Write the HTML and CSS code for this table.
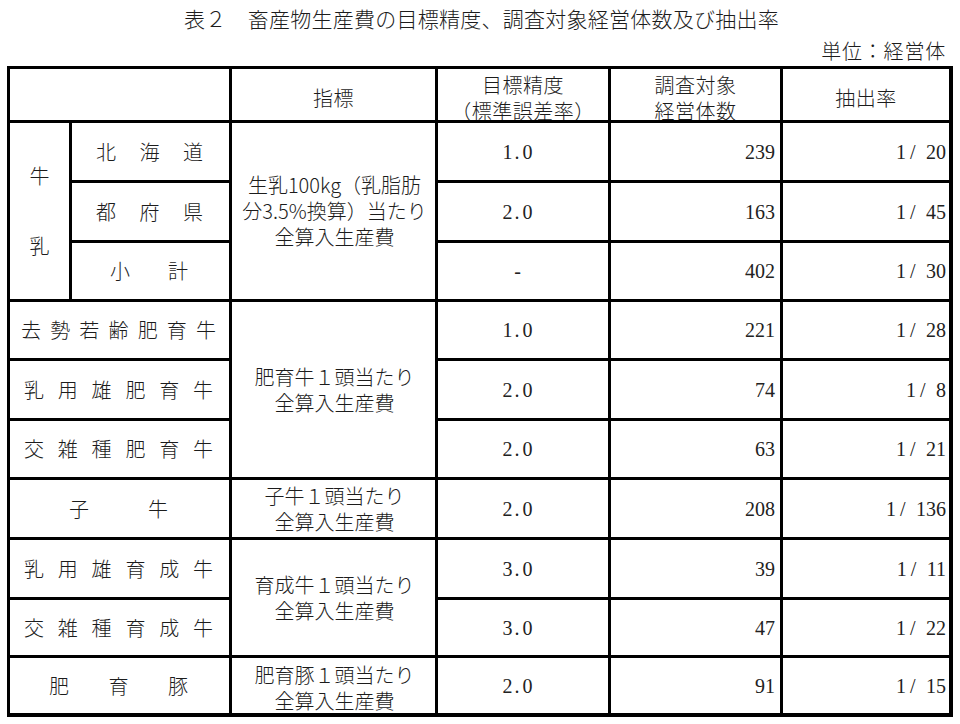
FILE: index.html
```html
<!DOCTYPE html>
<html lang="ja">
<head>
<meta charset="utf-8">
<title>表２ 畜産物生産費の目標精度、調査対象経営体数及び抽出率</title>
<link rel="stylesheet" href="styles.css">
</head>
<body>
<div class="page">
  <h1 class="title">表２　畜産物生産費の目標精度、調査対象経営体数及び抽出率</h1>
  <div class="unit">単位：経営体</div>
  <div class="table">
    <div class="cell hd span2"></div>
    <div class="cell hd">指標</div>
    <div class="cell hd col"><span>目標精度</span><span>（標準誤差率）</span></div>
    <div class="cell hd col"><span>調査対象</span><span>経営体数</span></div>
    <div class="cell hd">抽出率</div>

    <div class="cell rs3 milk"><span>牛</span><span>乳</span></div>
    <div class="cell dist p-hok"><span>北</span><span>海</span><span>道</span></div>
    <div class="cell rs3 col idx"><span>生乳100kg（乳脂肪</span><span>分3.5%換算）当たり</span><span>全算入生産費</span></div>
    <div class="cell num ctr">1<span class="dt">.</span>0</div>
    <div class="cell num rt">239</div>
    <div class="cell num rt r2">1<span class="sl">/</span>20</div>

    <div class="cell dist p-hok"><span>都</span><span>府</span><span>県</span></div>
    <div class="cell num ctr">2<span class="dt">.</span>0</div>
    <div class="cell num rt">163</div>
    <div class="cell num rt r2">1<span class="sl">/</span>45</div>

    <div class="cell dist p-sho"><span>小</span><span>計</span></div>
    <div class="cell num ctr">-</div>
    <div class="cell num rt">402</div>
    <div class="cell num rt r2">1<span class="sl">/</span>30</div>

    <div class="cell span2 dist p-7"><span>去</span><span>勢</span><span>若</span><span>齢</span><span>肥</span><span>育</span><span>牛</span></div>
    <div class="cell rs3 col idx"><span>肥育牛１頭当たり</span><span>全算入生産費</span></div>
    <div class="cell num ctr">1<span class="dt">.</span>0</div>
    <div class="cell num rt">221</div>
    <div class="cell num rt r2">1<span class="sl">/</span>28</div>

    <div class="cell span2 dist p-6"><span>乳</span><span>用</span><span>雄</span><span>肥</span><span>育</span><span>牛</span></div>
    <div class="cell num ctr">2<span class="dt">.</span>0</div>
    <div class="cell num rt">74</div>
    <div class="cell num rt r2">1<span class="sl">/</span>8</div>

    <div class="cell span2 dist p-6"><span>交</span><span>雑</span><span>種</span><span>肥</span><span>育</span><span>牛</span></div>
    <div class="cell num ctr">2<span class="dt">.</span>0</div>
    <div class="cell num rt">63</div>
    <div class="cell num rt r2">1<span class="sl">/</span>21</div>

    <div class="cell span2 dist p-ko"><span>子</span><span>牛</span></div>
    <div class="cell col idx"><span>子牛１頭当たり</span><span>全算入生産費</span></div>
    <div class="cell num ctr">2<span class="dt">.</span>0</div>
    <div class="cell num rt">208</div>
    <div class="cell num rt r2">1<span class="sl">/</span>136</div>

    <div class="cell span2 dist p-6"><span>乳</span><span>用</span><span>雄</span><span>育</span><span>成</span><span>牛</span></div>
    <div class="cell rs2 col idx"><span>育成牛１頭当たり</span><span>全算入生産費</span></div>
    <div class="cell num ctr">3<span class="dt">.</span>0</div>
    <div class="cell num rt">39</div>
    <div class="cell num rt r2">1<span class="sl">/</span>11</div>

    <div class="cell span2 dist p-6"><span>交</span><span>雑</span><span>種</span><span>育</span><span>成</span><span>牛</span></div>
    <div class="cell num ctr">3<span class="dt">.</span>0</div>
    <div class="cell num rt">47</div>
    <div class="cell num rt r2">1<span class="sl">/</span>22</div>

    <div class="cell span2 dist p-buta"><span>肥</span><span>育</span><span>豚</span></div>
    <div class="cell col idx low"><span>肥育豚１頭当たり</span><span>全算入生産費</span></div>
    <div class="cell num ctr">2<span class="dt">.</span>0</div>
    <div class="cell num rt">91</div>
    <div class="cell num rt r2">1<span class="sl">/</span>15</div>
  </div>
</div>
</body>
</html>
```

FILE: styles.css
```css
html, body {
  margin: 0;
  padding: 0;
  background: #ffffff;
}

body {
  font-family: "Noto Sans CJK JP", "Noto Sans CJK SC", sans-serif;
  color: #1c1c1c;
  font-weight: 300;
}

.page {
  width: 960px;
  height: 724px;
  overflow: hidden;
}

.title {
  margin: 0;
  height: 36px;
  line-height: 36px;
  font-size: 21px;
  font-weight: 300;
  letter-spacing: 0.25px;
  text-align: center;
  padding-left: 3px;
}

.unit {
  margin-top: 2px;
  height: 26px;
  line-height: 26px;
  font-size: 20px;
  letter-spacing: 0.8px;
  text-align: right;
  padding-right: 14px;
}

.table {
  margin: 2px 0 0 7px;
  width: 946px;
  box-sizing: border-box;
  background: #000000;
  padding: 3px 4px 4px 3px;
  display: grid;
  gap: 3px;
  grid-template-columns: 59px 157px 203px 170px 169px 166px;
  grid-template-rows: 51px 57px 57px 56px 56px 57px 56px 57px 57px 55px 55px;
}

.cell {
  background: #ffffff;
  display: flex;
  align-items: center;
  justify-content: center;
  font-size: 20px;
  line-height: 26px;
  overflow: hidden;
  min-width: 0;
}

.span2 { grid-column: span 2; }
.rs3 { grid-row: span 3; }
.rs2 { grid-row: span 2; }

.hd {
  padding-top: 6px;
  box-sizing: border-box;
  letter-spacing: 0.5px;
}

.col {
  flex-direction: column;
}

.col > span {
  display: block;
  white-space: nowrap;
}

.hd.col > span {
  line-height: 26px;
}

.idx {
  line-height: 26px;
  padding-left: 2px;
}

.idx.low {
  padding-top: 5px;
  box-sizing: border-box;
}

.idx > span {
  font-family: "Noto Sans CJK JP", sans-serif;
}

.milk {
  flex-direction: column;
  gap: 50px;
}

.milk > span {
  line-height: 20px;
  display: block;
}

.dist {
  justify-content: space-between;
  box-sizing: border-box;
}

.dist > span {
  display: block;
  width: 20px;
  text-align: center;
  line-height: 20px;
}

.p-hok { padding: 0 26px 0 24px; }
.p-sho { padding: 0 41px 0 38px; }
.p-7 { padding: 0 13px 0 11px; }
.p-6 { padding: 0 16px 0 14px; }
.p-ko { padding: 0 61px 0 59px; }
.p-buta { padding: 0 41px 0 39px; }

.num {
  font-family: "Liberation Serif", "Times New Roman", serif;
  font-weight: 400;
  font-size: 20px;
  color: #222222;
  white-space: nowrap;
}

.ctr {
  justify-content: center;
  padding-right: 11px;
  box-sizing: border-box;
}

.rt {
  justify-content: flex-end;
  padding-right: 5px;
  box-sizing: border-box;
}

.rt.r2 {
  padding-right: 3px;
}

.dt {
  display: inline-block;
  width: 10px;
  padding-left: 2px;
  box-sizing: border-box;
  text-align: left;
}

.sl {
  display: inline-block;
  width: 20px;
  padding-left: 4px;
  box-sizing: border-box;
  text-align: left;
}
```
